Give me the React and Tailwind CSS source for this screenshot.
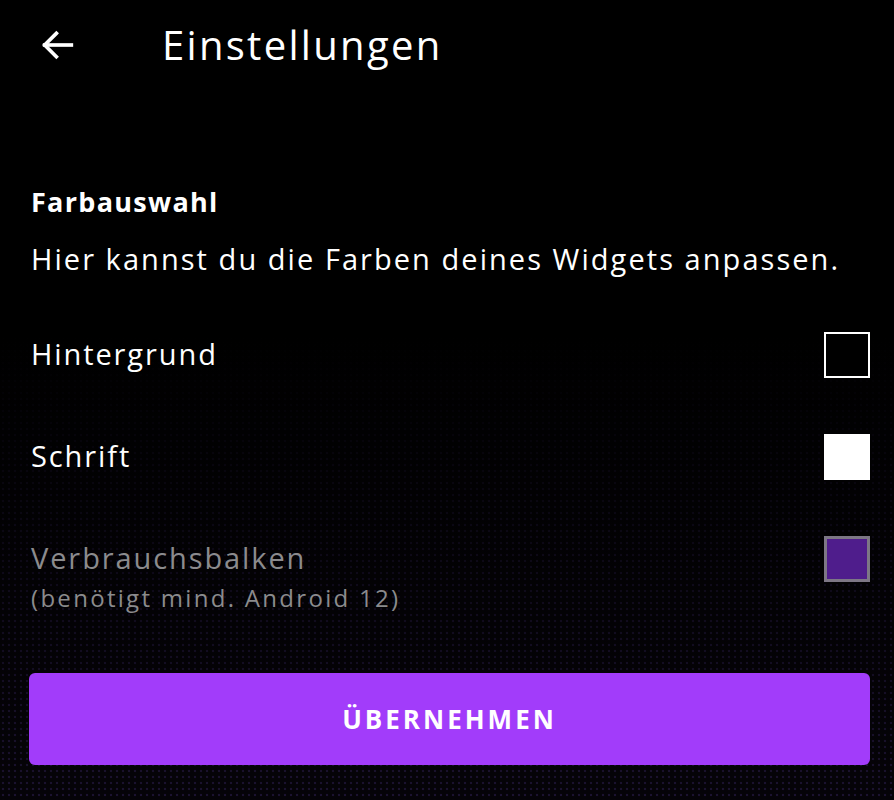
import { useState } from 'react'

const FONT = { fontFamily: '"Open Sans", "Noto Sans", sans-serif' }

function ColorBox({ variant }) {
  if (variant === 'outline') {
    return <div className="w-[46px] h-[46px] border-2 border-white bg-black flex-shrink-0" />
  }
  if (variant === 'white') {
    return <div className="w-[46px] h-[46px] bg-white flex-shrink-0" />
  }
  return <div className="w-[46px] h-[46px] border-[3px] border-[#7d7785] bg-[#4f1d8c] flex-shrink-0" />
}

function ColorRow({ label, hint, box, disabled }) {
  return (
    <div className="flex items-start justify-between h-[102px]">
      <div className="flex flex-col">
        <span className={disabled ? 'text-[29px] leading-[44px] tracking-[1.9px] text-[#8b8b8d]' : 'text-[29px] leading-[44px] tracking-[1.9px] text-white'}>
          {label}
        </span>
        {hint && <span className="mt-[4px] text-[24px] leading-[28px] text-[#8b8b8d] tracking-[2.3px]">{hint}</span>}
      </div>
      <ColorBox variant={box} />
    </div>
  )
}

export default function App() {
  const [rows] = useState([
    { key: 'bg', label: 'Hintergrund', box: 'outline' },
    { key: 'font', label: 'Schrift', box: 'white' },
    { key: 'bar', label: 'Verbrauchsbalken', hint: '(benötigt mind. Android 12)', box: 'purple', disabled: true },
  ])

  return (
    <div
      style={FONT}
      className="w-[894px] h-[800px] overflow-hidden bg-black bg-[linear-gradient(to_bottom,#000_42%,rgba(0,0,0,0)_100%),radial-gradient(circle,#1b1230_1.1px,#050308_1.6px)] bg-[length:100%_100%,6px_6px] text-white flex flex-col"
    >
      {/* header */}
      <div className="flex items-center h-[90px] pl-[38px]">
        <svg width="40" height="40" viewBox="0 0 24 24" fill="none" stroke="white" strokeWidth="2.2" strokeLinecap="square">
          <path d="M20 12H4" />
          <path d="M11 5l-7 7 7 7" />
        </svg>
        <h1 className="ml-[84px] text-[40px] font-normal tracking-[2.3px] leading-none">Einstellungen</h1>
      </div>

      <div className="pl-[31px] pr-[24px] pt-[95px] flex flex-col">
        <h2 className="text-[27px] font-bold leading-[34px] tracking-[1.3px]">Farbauswahl</h2>
        <p className="mt-[20px] text-[29px] leading-[40px] tracking-[2.05px] whitespace-nowrap">
          Hier kannst du die Farben deines Widgets anpassen.
        </p>

        <div className="mt-[53px] flex flex-col">
          {rows.map(r => (
            <ColorRow key={r.key} label={r.label} hint={r.hint} box={r.box} disabled={r.disabled} />
          ))}
        </div>
      </div>

      <div className="pl-[29px] pr-[24px] mt-[35px]">
        <button className="w-full h-[92px] rounded-[6px] bg-[#a23cfa] text-white text-[26px] font-bold tracking-[3px]">
          ÜBERNEHMEN
        </button>
      </div>
    </div>
  )
}
